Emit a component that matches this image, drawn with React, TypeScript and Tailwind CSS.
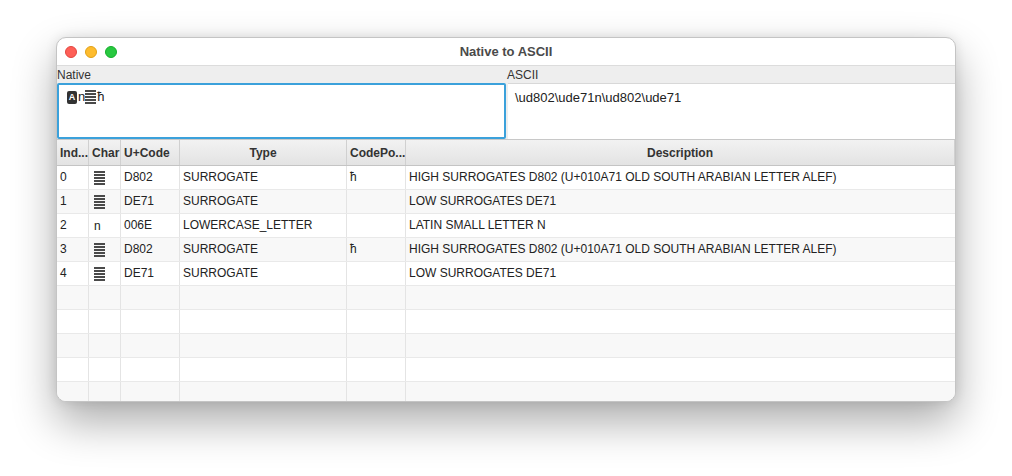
import React from "react";

const cols = [
  { label: "Ind...", w: "w-[32px]", align: "text-left" },
  { label: "Char", w: "w-[32px]", align: "text-left" },
  { label: "U+Code", w: "w-[59px]", align: "text-left" },
  { label: "Type", w: "w-[167px]", align: "text-center" },
  { label: "CodePo...", w: "w-[59px]", align: "text-left" },
  { label: "Description", w: "flex-1", align: "text-center" },
];

type Row = { idx: string; ch: "bars" | "n"; code: string; type: string; cp: boolean; desc: string };

const rows: Row[] = [
  { idx: "0", ch: "bars", code: "D802", type: "SURROGATE", cp: true, desc: "HIGH SURROGATES D802 (U+010A71 OLD SOUTH ARABIAN LETTER ALEF)" },
  { idx: "1", ch: "bars", code: "DE71", type: "SURROGATE", cp: false, desc: "LOW SURROGATES DE71" },
  { idx: "2", ch: "n", code: "006E", type: "LOWERCASE_LETTER", cp: false, desc: "LATIN SMALL LETTER N" },
  { idx: "3", ch: "bars", code: "D802", type: "SURROGATE", cp: true, desc: "HIGH SURROGATES D802 (U+010A71 OLD SOUTH ARABIAN LETTER ALEF)" },
  { idx: "4", ch: "bars", code: "DE71", type: "SURROGATE", cp: false, desc: "LOW SURROGATES DE71" },
];

function Bars() {
  // missing-glyph rendering: stacked horizontal strokes
  return (
    <span className="inline-flex flex-col gap-[1px] w-[11px] align-middle">
      <span className="h-[2px] bg-[#4a4a4a]" />
      <span className="h-[2px] bg-[#4a4a4a]" />
      <span className="h-[2px] bg-[#4a4a4a]" />
      <span className="h-[2px] bg-[#4a4a4a]" />
      <span className="h-[2px] bg-[#4a4a4a]" />
    </span>
  );
}

function BoxA() {
  return (
    <span className="inline-flex items-center justify-center w-[10px] h-[13px] rounded-[2px] bg-[#333] align-middle">
      <span className="text-[9px] leading-none text-white font-bold">A</span>
    </span>
  );
}

export default function App() {
  const empty = Array.from({ length: 5 });
  return (
    <div className="w-[1012px] h-[476px] bg-white flex justify-center pt-[37px] font-['Liberation_Sans',Arial,sans-serif]">
      <div className="w-[900px] h-[365px] rounded-[10px] bg-white flex flex-col overflow-hidden border border-[#c4c4c4] shadow-[0_20px_44px_rgba(0,0,0,0.33),0_0_12px_rgba(0,0,0,0.1)]">
        {/* title bar */}
        <div className="h-[28px] shrink-0 flex items-center px-[8px] border-b border-[#dcdcdc] relative">
          <div className="flex gap-[8px]">
            <span className="w-[12px] h-[12px] rounded-full bg-[#fe5f57] border border-[#e2463f]" />
            <span className="w-[12px] h-[12px] rounded-full bg-[#febc2e] border border-[#e1a116]" />
            <span className="w-[12px] h-[12px] rounded-full bg-[#28c840] border border-[#14ae2a]" />
          </div>
          <div className="absolute inset-0 flex items-center justify-center text-[13px] font-bold text-[#4a4a4a]">Native to ASCII</div>
        </div>

        {/* labels */}
        <div className="h-[17px] shrink-0 flex bg-[#eeeeee] text-[12px] text-[#333] leading-[18px]">
          <div className="w-[450px]">Native</div>
          <div className="flex-1">ASCII</div>
        </div>

        {/* text areas */}
        <div className="h-[56px] shrink-0 flex bg-[#eeeeee]">
          <div className="w-[449px] border-2 border-[#3ba1db] rounded-[2px] bg-white px-[8px] pt-[4px] text-[13px] text-[#222]">
            <span className="flex items-center h-[16px]">
              <BoxA />
              <span className="ml-[1px]">n</span>
              <Bars />
              <span className="ml-[1px]">ћ</span>
            </span>
          </div>
          <div className="w-[2px]" />
          <div className="flex-1 bg-white border-t border-[#d8d8d8] px-[7px] pt-[4px] text-[13px] text-[#222]">\ud802\ude71n\ud802\ude71</div>
        </div>

        {/* table header */}
        <div className="h-[27px] shrink-0 flex bg-[linear-gradient(#f2f2f2,#e3e3e3)] border-t border-[#c8c8c8] border-b border-b-[#c4c4c4] text-[12px] font-bold text-[#333]">
          {cols.map((c, i) => (
            <div key={i} className={`${c.w} ${c.align} px-[3px] leading-[27px] border-r border-[#d0d0d0] whitespace-nowrap overflow-hidden`}>
              {c.label}
            </div>
          ))}
        </div>

        {/* body */}
        <div className="flex-1 overflow-hidden text-[12px] text-[#222]">
          {rows.map((r, i) => (
            <div key={i} className={`h-[24px] flex border-b border-[#e9e9e9] ${i % 2 ? "bg-[#f8f8f8]" : "bg-white"}`}>
              <div className="w-[32px] px-[3px] leading-[23px] border-r border-[#e4e4e4]">{r.idx}</div>
              <div className="w-[32px] px-[5px] flex items-center border-r border-[#e4e4e4]">
                {r.ch === "bars" ? <Bars /> : <span>n</span>}
              </div>
              <div className="w-[59px] px-[3px] leading-[23px] border-r border-[#e4e4e4]">{r.code}</div>
              <div className="w-[167px] px-[3px] leading-[23px] border-r border-[#e4e4e4]">{r.type}</div>
              <div className="w-[59px] px-[3px] leading-[23px] border-r border-[#e4e4e4]">{r.cp ? "ћ" : ""}</div>
              <div className="flex-1 px-[3px] leading-[23px] whitespace-nowrap">{r.desc}</div>
            </div>
          ))}
          {empty.map((_, i) => (
            <div key={`e${i}`} className={`h-[24px] flex border-b border-[#e9e9e9] ${(i + 5) % 2 ? "bg-[#f8f8f8]" : "bg-white"}`}>
              <div className="w-[32px] border-r border-[#e4e4e4]" />
              <div className="w-[32px] border-r border-[#e4e4e4]" />
              <div className="w-[59px] border-r border-[#e4e4e4]" />
              <div className="w-[167px] border-r border-[#e4e4e4]" />
              <div className="w-[59px] border-r border-[#e4e4e4]" />
              <div className="flex-1" />
            </div>
          ))}
        </div>
      </div>
    </div>
  );
}
